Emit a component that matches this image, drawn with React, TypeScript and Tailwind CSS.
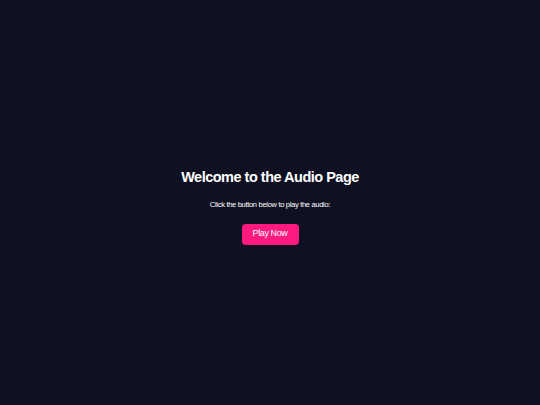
export default function App() {
  return (
    <div className="min-h-screen w-full bg-[#0f1122] flex flex-col items-center justify-center pt-[9px] text-white" style={{ fontFamily: '"Liberation Sans", Arial, sans-serif' }}>
      <h1 className="text-[14.5px] font-bold leading-none tracking-[-0.5px]">Welcome to the Audio Page</h1>
      <p className="mt-[17px] text-[7.5px] leading-none tracking-[-0.3px]">Click the button below to play the audio:</p>
      <button className="mt-[15px] w-[57px] h-[21px] rounded-[4px] bg-[#ff1a7f] text-[9px] tracking-[-0.4px] text-white">Play Now</button>
    </div>
  );
}
